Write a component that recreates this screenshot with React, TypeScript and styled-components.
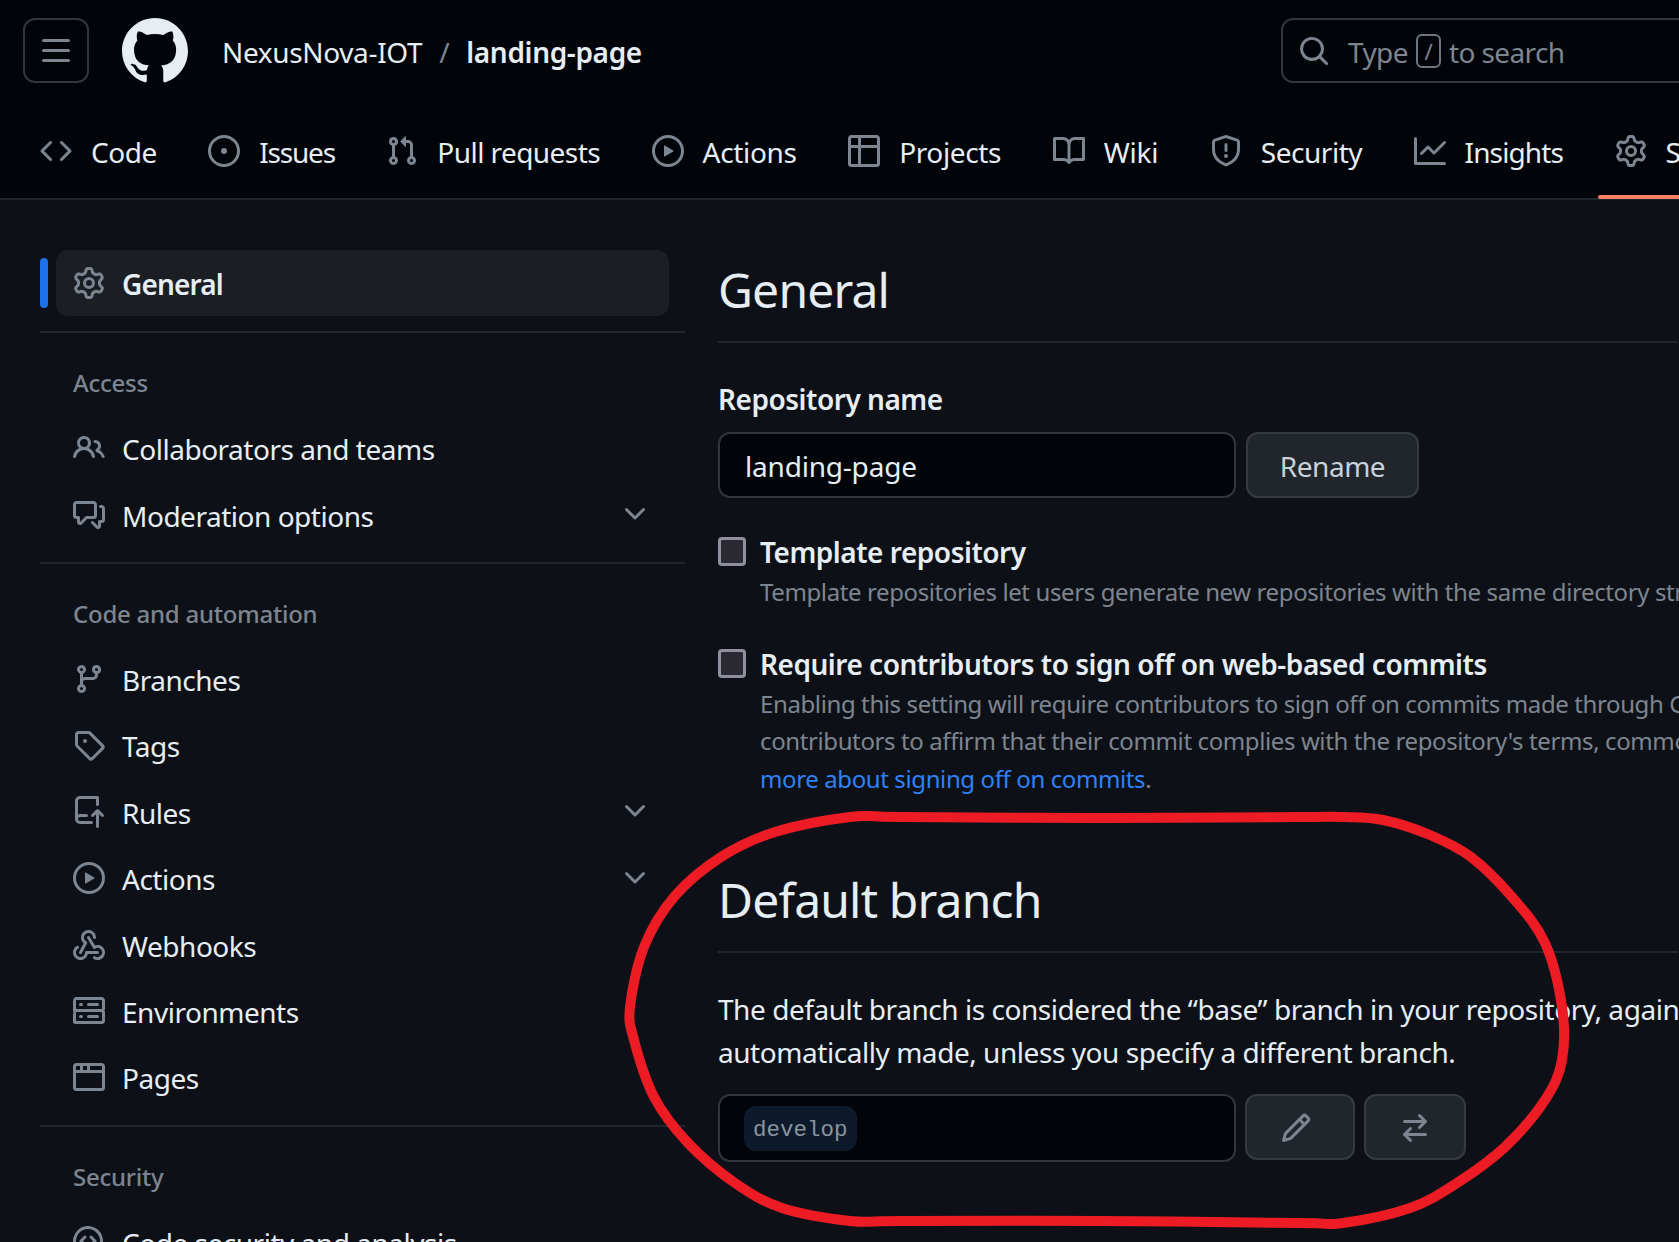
import React from "react";
import styled, { createGlobalStyle } from "styled-components";

const GlobalStyle = createGlobalStyle`
  html, body {
    margin: 0;
    padding: 0;
    background: #0d1117;
  }
  body {
    font-family: "Noto Sans", "Open Sans", "Liberation Sans", sans-serif;
    font-size: 28px;
    letter-spacing: -0.48px;
    color: #e6edf3;
  }
  * {
    box-sizing: border-box;
  }
`;

const Page = styled.div`
  position: relative;
  width: 1679px;
  height: 1242px;
  overflow: hidden;
  background: #0d1117;
`;

const Header = styled.header`
  height: 200px;
  background: #010409;
  border-bottom: 2px solid #21262d;
  padding-top: 18px;
`;

const TopRow = styled.div`
  display: flex;
  align-items: center;
  height: 65px;
  padding-left: 23px;
`;

const MenuButton = styled.div`
  display: flex;
  align-items: center;
  justify-content: center;
  width: 66px;
  height: 65px;
  border: 2px solid #30363d;
  border-radius: 12px;
  color: #7d8590;
  flex-shrink: 0;
`;

const Logo = styled.div`
  display: flex;
  margin-left: 33px;
  color: #e6edf3;
`;

const Crumbs = styled.div`
  display: flex;
  align-items: center;
  margin-left: 34px;
  margin-top: 3px;
  letter-spacing: -0.35px;
  white-space: nowrap;
`;

const CrumbSlash = styled.span`
  color: #7d8590;
  margin: 0 17px;
`;

const RepoName = styled.span`
  font-weight: 600;
`;

const SearchBox = styled.div`
  display: flex;
  align-items: center;
  flex-shrink: 0;
  width: 498px;
  height: 65px;
  margin-left: auto;
  margin-right: -100px;
  padding-left: 15px;
  border: 2px solid #30363d;
  border-radius: 12px;
  color: #7d8590;
  letter-spacing: -0.6px;
  white-space: nowrap;
`;

const SearchText = styled.span`
  margin-left: 18px;
  padding-top: 2px;
  display: flex;
  align-items: center;
`;

const SlashKey = styled.span`
  display: inline-flex;
  align-items: center;
  justify-content: center;
  width: 25px;
  height: 34px;
  margin: -2px 8px 0;
  border: 2px solid #6e7681;
  border-radius: 6px;
  font-size: 22px;
`;

const TabBar = styled.nav`
  display: flex;
  gap: 51.5px;
  height: 90px;
  margin-top: 25px;
  padding-left: 40px;
  white-space: nowrap;
`;

const Tab = styled.div<{ $active?: boolean; $track?: number }>`
  position: relative;
  display: flex;
  align-items: center;
  gap: 19px;
  padding-bottom: 2px;
  color: #e6edf3;
  letter-spacing: ${(p) => p.$track ?? -0.48}px;
  svg {
    color: #7d8590;
    margin-top: -2px;
  }
  &::after {
    content: "";
    display: ${(p) => (p.$active ? "block" : "none")};
    position: absolute;
    left: -17px;
    right: -17px;
    bottom: -1px;
    height: 4px;
    border-radius: 2px;
    background: #f78166;
  }
`;

const Body = styled.div`
  display: flex;
  align-items: flex-start;
  padding-left: 40px;
`;

const Sidebar = styled.aside`
  flex-shrink: 0;
  width: 645px;
  padding-top: 50px;
`;

const ActiveRow = styled.div`
  position: relative;
  display: flex;
  align-items: center;
  gap: 17px;
  width: 613px;
  height: 66px;
  margin: 0 0 15px 16px;
  padding: 2px 0 0 17px;
  border-radius: 12px;
  background: #1b1f24;
  font-weight: 600;
  letter-spacing: -0.85px;
  svg {
    color: #7d8590;
    margin-top: -2px;
  }
  &::before {
    content: "";
    position: absolute;
    left: -16px;
    top: 8px;
    width: 8px;
    height: 50px;
    border-radius: 4px;
    background: #1f6feb;
  }
`;

const Section = styled.section`
  border-top: 2px solid #21262d;
  padding: 31px 0 13px;
`;

const SectionTitle = styled.div`
  height: 38px;
  line-height: 38px;
  margin-bottom: 14px;
  padding-left: 33px;
  font-size: 24px;
  letter-spacing: -0.25px;
  color: #7d8590;
  font-weight: 500;
`;

const Row = styled.div`
  display: flex;
  align-items: center;
  gap: 17px;
  height: 66.4px;
  padding: 0 34px 0 33px;
  white-space: nowrap;
  svg {
    color: #7d8590;
    margin-top: -2px;
    flex-shrink: 0;
  }
`;

const RowChevron = styled.span`
  display: flex;
  margin-left: auto;
  margin-bottom: 1px;
`;

const Main = styled.main`
  flex-shrink: 0;
  width: 960px;
  margin-left: 33px;
  padding-top: 54px;
  white-space: nowrap;
`;

const Heading = styled.h2<{ $gap?: number }>`
  margin: ${(p) => p.$gap ?? 0}px 0 0;
  padding-bottom: 15px;
  border-bottom: 2px solid #21262d;
  font-size: 48px;
  line-height: 72px;
  font-weight: 400;
  letter-spacing: -0.82px;
`;

const FieldLabel = styled.div`
  margin-top: 35px;
  line-height: 42px;
  font-weight: 600;
`;

const NameRow = styled.div`
  display: flex;
  gap: 10px;
  margin-top: 12px;
`;

const NameInput = styled.div`
  display: flex;
  align-items: center;
  width: 518px;
  height: 66px;
  padding: 2px 0 0 25px;
  border: 2px solid #30363d;
  border-radius: 12px;
  background: #010409;
  letter-spacing: -0.2px;
`;

const Button = styled.div<{ $width: number; $shift?: number }>`
  display: flex;
  align-items: center;
  justify-content: center;
  width: ${(p) => p.$width}px;
  height: 66px;
  padding: 2px ${(p) => p.$shift ?? 0}px 0 0;
  border: 2px solid #363b42;
  border-radius: 12px;
  background: #21262d;
  color: #c9d1d9;
  svg {
    color: #7d8590;
  }
`;

const CheckRow = styled.div<{ $gap: number }>`
  display: flex;
  gap: 14px;
  margin-top: ${(p) => p.$gap}px;
`;

const CheckBox = styled.div`
  flex-shrink: 0;
  width: 28px;
  height: 29px;
  margin-top: 6px;
  border: 3px solid #8f8f9d;
  border-radius: 4px;
  background: #2b2a33;
`;

const CheckTitle = styled.div`
  line-height: 42px;
  font-weight: 600;
`;

const HelpText = styled.div`
  font-size: 24px;
  line-height: 37.5px;
  letter-spacing: -0.39px;
  color: #7d8590;
`;

const HelpLink = styled.span`
  color: #2f81f7;
`;

const Paragraph = styled.p`
  margin: 35px 0 21px;
  line-height: 42.6px;
  letter-spacing: -0.45px;
`;

const BranchRow = styled.div`
  display: flex;
  gap: 9px;
`;

const BranchBox = styled.div`
  display: flex;
  align-items: center;
  width: 518px;
  height: 68px;
  padding-left: 24px;
  border: 2px solid #30363d;
  border-radius: 12px;
  background: #010409;
`;

const BranchChip = styled.span`
  display: flex;
  align-items: center;
  height: 45px;
  padding: 3px 9px 0;
  border-radius: 12px;
  background: #0c1a2b;
  color: #8b949e;
  font-family: "Liberation Mono", "DejaVu Sans Mono", monospace;
  font-size: 22.5px;
  letter-spacing: 0;
`;

const Annotation = styled.svg`
  position: absolute;
  left: 0;
  top: 0;
  width: 1679px;
  height: 1242px;
  pointer-events: none;
`;

const icons = {
  mark: "M8 0c4.42 0 8 3.58 8 8a8.013 8.013 0 0 1-5.45 7.59c-.4.08-.55-.17-.55-.38 0-.27.01-1.13.01-2.2 0-.75-.25-1.23-.54-1.48 1.78-.2 3.65-.88 3.65-3.95 0-.88-.31-1.59-.82-2.15.08-.2.36-1.02-.08-2.12 0 0-.67-.22-2.2.82-.64-.18-1.32-.27-2-.27-.68 0-1.36.09-2 .27-1.53-1.03-2.2-.82-2.2-.82-.44 1.1-.16 1.92-.08 2.12-.51.56-.82 1.28-.82 2.15 0 3.06 1.86 3.75 3.64 3.95-.23.2-.44.55-.51 1.07-.46.21-1.61.55-2.33-.66-.15-.24-.6-.83-1.23-.82-.67.01-.27.38.01.53.34.19.73.9.82 1.13.16.45.68 1.31 2.69.94 0 .67.01 1.3.01 1.49 0 .21-.15.45-.55.38A7.995 7.995 0 0 1 0 8c0-4.42 3.58-8 8-8Z",
  bars: "M1 2.75A.75.75 0 0 1 1.75 2h12.5a.75.75 0 0 1 0 1.5H1.75A.75.75 0 0 1 1 2.75Zm0 5A.75.75 0 0 1 1.75 7h12.5a.75.75 0 0 1 0 1.5H1.75A.75.75 0 0 1 1 7.75ZM1.75 12h12.5a.75.75 0 0 1 0 1.5H1.75a.75.75 0 0 1 0-1.5Z",
  search: "M10.68 11.74a6 6 0 0 1-7.922-8.982 6 6 0 0 1 8.982 7.922l3.04 3.04a.749.749 0 0 1-.326 1.275.749.749 0 0 1-.734-.215ZM11.5 7a4.499 4.499 0 1 0-8.997 0A4.499 4.499 0 0 0 11.5 7Z",
  code: "m11.28 3.22 4.25 4.25a.75.75 0 0 1 0 1.06l-4.25 4.25a.749.749 0 0 1-1.275-.326.749.749 0 0 1 .215-.734L13.94 8l-3.72-3.72a.749.749 0 0 1 .326-1.275.749.749 0 0 1 .734.215Zm-6.56 0a.751.751 0 0 1 1.042.018.751.751 0 0 1 .018 1.042L2.06 8l3.72 3.72a.749.749 0 0 1-.326 1.275.749.749 0 0 1-.734-.215L.47 8.53a.75.75 0 0 1 0-1.06Z",
  issue: "M8 9.5a1.5 1.5 0 1 0 0-3 1.5 1.5 0 0 0 0 3Z M8 0a8 8 0 1 1 0 16A8 8 0 0 1 8 0ZM1.5 8a6.5 6.5 0 1 0 13 0 6.5 6.5 0 0 0-13 0Z",
  pull: "M1.5 3.25a2.25 2.25 0 1 1 3 2.122v5.256a2.251 2.251 0 1 1-1.5 0V5.372A2.25 2.25 0 0 1 1.5 3.25Zm5.677-.177L9.573.677A.25.25 0 0 1 10 .854V2.5h1A2.5 2.5 0 0 1 13.5 5v5.628a2.251 2.251 0 1 1-1.5 0V5a1 1 0 0 0-1-1h-1v1.646a.25.25 0 0 1-.427.177L7.177 3.427a.25.25 0 0 1 0-.354ZM3.75 2.5a.75.75 0 1 0 0 1.5.75.75 0 0 0 0-1.5Zm0 9.5a.75.75 0 1 0 0 1.5.75.75 0 0 0 0-1.5Zm8.25.75a.75.75 0 1 0 1.5 0 .75.75 0 0 0-1.5 0Z",
  play: "M8 0a8 8 0 1 1 0 16A8 8 0 0 1 8 0ZM1.5 8a6.5 6.5 0 1 0 13 0 6.5 6.5 0 0 0-13 0Zm4.879-2.773 4.264 2.559a.25.25 0 0 1 0 .428l-4.264 2.559A.25.25 0 0 1 6 10.559V5.442a.25.25 0 0 1 .379-.215Z",
  table: "M0 1.75C0 .784.784 0 1.75 0h12.5C15.216 0 16 .784 16 1.75v12.5A1.75 1.75 0 0 1 14.25 16H1.75A1.75 1.75 0 0 1 0 14.25ZM6.5 6.5v8h7.75a.25.25 0 0 0 .25-.25V6.5Zm8-1.5V1.75a.25.25 0 0 0-.25-.25H6.5V5Zm-13 1.5v7.75c0 .138.112.25.25.25H5v-8ZM5 5V1.5H1.75a.25.25 0 0 0-.25.25V5Z",
  book: "M0 1.75A.75.75 0 0 1 .75 1h4.253c1.227 0 2.317.59 3 1.501A3.743 3.743 0 0 1 11.006 1h4.245a.75.75 0 0 1 .75.75v10.5a.75.75 0 0 1-.75.75h-4.507a2.25 2.25 0 0 0-1.591.659l-.622.621a.75.75 0 0 1-1.06 0l-.622-.621A2.25 2.25 0 0 0 5.258 13H.75a.75.75 0 0 1-.75-.75Zm7.251 10.324.004-5.073-.002-2.253A2.25 2.25 0 0 0 5.003 2.5H1.5v9h3.757a3.75 3.75 0 0 1 1.994.574ZM8.755 4.75l-.004 7.322a3.752 3.752 0 0 1 1.992-.572H14.5v-9h-3.495a2.25 2.25 0 0 0-2.25 2.25Z",
  shield: "M7.467.133a1.748 1.748 0 0 1 1.066 0l5.25 1.68A1.75 1.75 0 0 1 15 3.48V7c0 1.566-.32 3.182-1.303 4.682-.983 1.498-2.585 2.813-5.032 3.855a1.697 1.697 0 0 1-1.33 0c-2.447-1.042-4.049-2.357-5.032-3.855C1.32 10.182 1 8.566 1 7V3.48a1.75 1.75 0 0 1 1.217-1.667Zm.61 1.429a.25.25 0 0 0-.153 0l-5.25 1.68a.25.25 0 0 0-.174.238V7c0 1.358.275 2.666 1.057 3.86.784 1.194 2.121 2.34 4.366 3.297a.196.196 0 0 0 .154 0c2.245-.956 3.582-2.104 4.366-3.298C13.225 9.666 13.5 8.36 13.5 7V3.48a.251.251 0 0 0-.174-.237l-5.25-1.68ZM8.75 4.75v3a.75.75 0 0 1-1.5 0v-3a.75.75 0 0 1 1.5 0ZM9 10.5a1 1 0 1 1-2 0 1 1 0 0 1 2 0Z",
  graph: "M1.5 1.75V13.5h13.75a.75.75 0 0 1 0 1.5H.75a.75.75 0 0 1-.75-.75V1.75a.75.75 0 0 1 1.5 0Zm14.28 2.53-5.25 5.25a.75.75 0 0 1-1.06 0L7 7.06 4.28 9.78a.751.751 0 0 1-1.042-.018.751.751 0 0 1-.018-1.042l3.25-3.25a.75.75 0 0 1 1.06 0L10 7.94l4.72-4.72a.751.751 0 0 1 1.042.018.751.751 0 0 1 .018 1.042Z",
  gear: "M8 0a8.2 8.2 0 0 1 .701.031C9.444.095 9.99.645 10.16 1.29l.288 1.107c.018.066.079.158.212.224.231.114.454.243.668.386.123.082.233.09.299.071l1.103-.303c.644-.176 1.392.021 1.82.63.27.385.506.792.704 1.218.315.675.111 1.422-.364 1.891l-.814.806c-.049.048-.098.147-.088.294.016.257.016.515 0 .772-.01.147.038.246.088.294l.814.806c.475.469.679 1.216.364 1.891a7.977 7.977 0 0 1-.704 1.217c-.428.61-1.176.807-1.82.63l-1.102-.302c-.067-.019-.177-.011-.3.071a5.909 5.909 0 0 1-.668.386c-.133.066-.194.158-.211.224l-.29 1.106c-.168.646-.715 1.196-1.458 1.26a8.006 8.006 0 0 1-1.402 0c-.743-.064-1.289-.614-1.458-1.26l-.289-1.106c-.018-.066-.079-.158-.212-.224a5.738 5.738 0 0 1-.668-.386c-.123-.082-.233-.09-.299-.071l-1.103.303c-.644.176-1.392-.021-1.82-.63a8.12 8.12 0 0 1-.704-1.218c-.315-.675-.111-1.422.363-1.891l.815-.806c.05-.048.098-.147.088-.294a6.214 6.214 0 0 1 0-.772c.01-.147-.038-.246-.088-.294l-.815-.806C.635 6.045.431 5.298.746 4.623a7.92 7.92 0 0 1 .704-1.217c.428-.61 1.176-.807 1.82-.63l1.102.302c.067.019.177.011.3-.071.214-.143.437-.272.668-.386.133-.066.194-.158.211-.224l.29-1.106C6.009.645 6.556.095 7.299.03 7.53.01 7.764 0 8 0Zm-.571 1.525c-.036.003-.108.036-.137.146l-.289 1.105c-.147.561-.549.967-.998 1.189-.173.086-.34.183-.5.29-.417.278-.97.423-1.529.27l-1.103-.303c-.109-.03-.175.016-.195.045-.22.312-.412.644-.573.99-.014.031-.021.11.059.19l.815.806c.411.406.562.957.53 1.456a4.709 4.709 0 0 0 0 .582c.032.499-.119 1.05-.53 1.456l-.815.806c-.081.08-.073.159-.059.19.162.346.353.677.573.989.02.03.085.076.195.046l1.102-.303c.56-.153 1.113-.008 1.53.27.161.107.328.204.501.29.447.222.85.629.997 1.189l.289 1.105c.029.109.101.143.137.146a6.6 6.6 0 0 0 1.142 0c.036-.003.108-.036.137-.146l.289-1.105c.147-.561.549-.967.998-1.189.173-.086.34-.183.5-.29.417-.278.97-.423 1.529-.27l1.103.303c.109.029.175-.016.195-.045.22-.313.411-.644.573-.99.014-.031.021-.11-.059-.19l-.815-.806c-.411-.406-.562-.957-.53-1.456a4.709 4.709 0 0 0 0-.582c-.032-.499.119-1.05.53-1.456l.815-.806c.081-.08.073-.159.059-.19a6.464 6.464 0 0 0-.573-.989c-.02-.03-.085-.076-.195-.046l-1.102.303c-.56.153-1.113.008-1.53-.27a4.44 4.44 0 0 0-.501-.29c-.447-.222-.85-.629-.997-1.189l-.289-1.105c-.029-.11-.101-.143-.137-.146a6.6 6.6 0 0 0-1.142 0ZM11 8a3 3 0 1 1-6 0 3 3 0 0 1 6 0ZM9.5 8a1.5 1.5 0 1 0-3.001.001A1.5 1.5 0 0 0 9.5 8Z",
  people: "M2 5.5a3.5 3.5 0 1 1 5.898 2.549 5.508 5.508 0 0 1 3.034 4.084.75.75 0 1 1-1.482.235 4 4 0 0 0-7.9 0 .75.75 0 0 1-1.482-.236A5.507 5.507 0 0 1 3.102 8.05 3.493 3.493 0 0 1 2 5.5ZM11 4a3.001 3.001 0 0 1 2.22 5.018 5.01 5.01 0 0 1 2.56 3.012.749.749 0 0 1-.885.954.752.752 0 0 1-.549-.514 3.507 3.507 0 0 0-2.522-2.372.75.75 0 0 1-.574-.73v-.352a.75.75 0 0 1 .416-.672A1.5 1.5 0 0 0 11 5.5.75.75 0 0 1 11 4Zm-5.5-.5a2 2 0 1 0-.001 3.999A2 2 0 0 0 5.5 3.5Z",
  discussion: "M1.75 1h8.5c.966 0 1.75.784 1.75 1.75v5.5A1.75 1.75 0 0 1 10.25 10H7.061l-2.574 2.573A1.458 1.458 0 0 1 2 11.543V10h-.25A1.75 1.75 0 0 1 0 8.25v-5.5C0 1.784.784 1 1.75 1ZM1.5 2.75v5.5c0 .138.112.25.25.25h1a.75.75 0 0 1 .75.75v2.19l2.72-2.72a.749.749 0 0 1 .53-.22h3.5a.25.25 0 0 0 .25-.25v-5.5a.25.25 0 0 0-.25-.25h-8.5a.25.25 0 0 0-.25.25Zm13 2a.25.25 0 0 0-.25-.25h-.5a.75.75 0 0 1 0-1.5h.5c.966 0 1.75.784 1.75 1.75v5.5A1.75 1.75 0 0 1 14.25 12H14v1.543a1.458 1.458 0 0 1-2.487 1.03L9.22 12.28a.749.749 0 0 1 .326-1.275.749.749 0 0 1 .734.215l2.22 2.22v-2.19a.75.75 0 0 1 .75-.75h1a.25.25 0 0 0 .25-.25Z",
  chevron: "M12.78 5.22a.749.749 0 0 1 0 1.06l-4.25 4.25a.749.749 0 0 1-1.06 0L3.22 6.28a.749.749 0 1 1 1.06-1.06L8 8.939l3.72-3.719a.749.749 0 0 1 1.06 0Z",
  branch: "M9.5 3.25a2.25 2.25 0 1 1 3 2.122V6A2.5 2.5 0 0 1 10 8.5H6a1 1 0 0 0-1 1v1.128a2.251 2.251 0 1 1-1.5 0V5.372a2.25 2.25 0 1 1 1.5 0v1.836A2.493 2.493 0 0 1 6 7h4a1 1 0 0 0 1-1v-.628A2.25 2.25 0 0 1 9.5 3.25Zm-6 0a.75.75 0 1 0 1.5 0 .75.75 0 0 0-1.5 0Zm8.25-.75a.75.75 0 1 0 0 1.5.75.75 0 0 0 0-1.5ZM4.25 12a.75.75 0 1 0 0 1.5.75.75 0 0 0 0-1.5Z",
  tag: "M1 7.775V2.75C1 1.784 1.784 1 2.75 1h5.025c.464 0 .91.184 1.238.513l6.25 6.25a1.75 1.75 0 0 1 0 2.474l-5.026 5.026a1.75 1.75 0 0 1-2.474 0l-6.25-6.25A1.75 1.75 0 0 1 1 7.775Zm1.5 0c0 .066.026.13.073.177l6.25 6.25a.25.25 0 0 0 .354 0l5.025-5.025a.25.25 0 0 0 0-.354l-6.25-6.25a.25.25 0 0 0-.177-.073H2.75a.25.25 0 0 0-.25.25ZM6 5a1 1 0 1 1 0 2 1 1 0 0 1 0-2Z",
  repoPush: "M1 2.5A2.5 2.5 0 0 1 3.5 0h8.75a.75.75 0 0 1 .75.75v3.5a.75.75 0 0 1-1.5 0V1.5h-8a1 1 0 0 0-1 1v6.708A2.493 2.493 0 0 1 3.5 9h3.25a.75.75 0 0 1 0 1.5H3.5a1 1 0 0 0 0 2h5.75a.75.75 0 0 1 0 1.5H3.5A2.5 2.5 0 0 1 1 11.5Zm13.23 7.79h-.001l-1.224-1.224v6.184a.75.75 0 0 1-1.5 0V9.066L10.28 10.29a.75.75 0 0 1-1.06-1.061l2.505-2.504a.75.75 0 0 1 1.06 0L15.29 9.23a.751.751 0 0 1-.018 1.042.751.751 0 0 1-1.042.018Z",
  webhook: "M5.5 4.25a2.25 2.25 0 0 1 4.5 0 .75.75 0 0 0 1.5 0 3.75 3.75 0 1 0-6.14 2.889l-2.272 4.258a.75.75 0 0 0 1.324.706L7 7.25a.75.75 0 0 0-.309-1.015A2.25 2.25 0 0 1 5.5 4.25Z M7.364 3.607a.75.75 0 0 1 1.03.257l2.608 4.349a3.75 3.75 0 1 1-.628 6.785.75.75 0 0 1 .752-1.299 2.25 2.25 0 1 0-.033-3.88.75.75 0 0 1-1.03-.256L7.107 4.636a.75.75 0 0 1 .257-1.03Z M2.9 8.776A.75.75 0 0 1 2.625 9.8 2.25 2.25 0 1 0 6 11.75a.75.75 0 0 1 .75-.751h5.5a.75.75 0 0 1 0 1.5H7.425a3.751 3.751 0 1 1-5.55-3.998.75.75 0 0 1 1.024.274Z",
  server: "M1.75 1h12.5c.966 0 1.75.784 1.75 1.75v4c0 .372-.116.717-.314 1 .198.283.314.628.314 1v4a1.75 1.75 0 0 1-1.75 1.75H1.75A1.75 1.75 0 0 1 0 13.75v-4c0-.372.116-.717.314-1a1.739 1.739 0 0 1-.314-1v-4C0 1.784.784 1 1.75 1ZM1.5 2.75v4c0 .138.112.25.25.25h12.5a.25.25 0 0 0 .25-.25v-4a.25.25 0 0 0-.25-.25H1.75a.25.25 0 0 0-.25.25Zm.25 5.75a.25.25 0 0 0-.25.25v4c0 .138.112.25.25.25h12.5a.25.25 0 0 0 .25-.25v-4a.25.25 0 0 0-.25-.25ZM7 4.75A.75.75 0 0 1 7.75 4h4.5a.75.75 0 0 1 0 1.5h-4.5A.75.75 0 0 1 7 4.75ZM7.75 10h4.5a.75.75 0 0 1 0 1.5h-4.5a.75.75 0 0 1 0-1.5ZM3 4.75A.75.75 0 0 1 3.75 4h.5a.75.75 0 0 1 0 1.5h-.5A.75.75 0 0 1 3 4.75ZM3.75 10h.5a.75.75 0 0 1 0 1.5h-.5a.75.75 0 0 1 0-1.5Z",
  browser: "M0 2.75C0 1.784.784 1 1.75 1h12.5c.966 0 1.75.784 1.75 1.75v10.5A1.75 1.75 0 0 1 14.25 15H1.75A1.75 1.75 0 0 1 0 13.25ZM14.5 6h-13v7.25c0 .138.112.25.25.25h12.5a.25.25 0 0 0 .25-.25Zm-6-3.5v2h6V2.75a.25.25 0 0 0-.25-.25ZM5 2.5v2h2v-2Zm-3.25 0a.25.25 0 0 0-.25.25V4.5h2v-2Z",
  pencil: "M11.013 1.427a1.75 1.75 0 0 1 2.474 0l1.086 1.086a1.75 1.75 0 0 1 0 2.474l-8.61 8.61c-.21.21-.47.364-.756.445l-3.251.93a.75.75 0 0 1-.927-.928l.929-3.25c.081-.286.235-.547.445-.758l8.61-8.61Zm.176 4.823L9.75 4.81l-6.286 6.287a.253.253 0 0 0-.064.108l-.558 1.953 1.953-.558a.253.253 0 0 0 .108-.064Zm1.238-3.763a.25.25 0 0 0-.354 0L10.811 3.75l1.439 1.44 1.263-1.263a.25.25 0 0 0 0-.354Z",
  arrowSwitch: "M5.22 14.78a.75.75 0 0 0 1.06-1.06L4.56 12h8.69a.75.75 0 0 0 0-1.5H4.56l1.72-1.72a.75.75 0 0 0-1.06-1.06l-3 3a.75.75 0 0 0 0 1.06l3 3Zm5.56-6.5a.75.75 0 1 1-1.06-1.06l1.72-1.72H2.75a.75.75 0 0 1 0-1.5h8.69L9.72 2.28a.75.75 0 0 1 1.06-1.06l3 3a.75.75 0 0 1 0 1.06l-3 3Z",
  codescan: "M8.47 4.97a.75.75 0 0 0 0 1.06L9.94 7.5 8.47 8.97a.75.75 0 1 0 1.06 1.06l2-2a.75.75 0 0 0 0-1.06l-2-2a.75.75 0 0 0-1.06 0ZM6.53 6.03a.75.75 0 0 0-1.06-1.06l-2 2a.75.75 0 0 0 0 1.06l2 2a.75.75 0 1 0 1.06-1.06L5.06 7.5l1.47-1.47Z M12.246 13.307a7.501 7.501 0 1 1 1.06-1.06l2.474 2.473a.749.749 0 0 1-.326 1.275.749.749 0 0 1-.734-.215ZM1.5 7.5a6.002 6.002 0 0 0 3.608 5.504 6.002 6.002 0 0 0 6.486-1.117.748.748 0 0 1 .293-.293A6 6 0 1 0 1.5 7.5Z",
};

type IconName = keyof typeof icons;

const Octicon = ({ name, size = 32 }: { name: IconName; size?: number }) => (
  <svg width={size} height={size} viewBox="0 0 16 16" fill="currentColor">
    <path d={icons[name]} />
  </svg>
);

// hand drawn ring around the default branch block, traced from the picture
const ringPoints: [number, number][] = [
  [850, 817], [900, 817], [1100, 818], [1300, 817], [1343, 817], [1383, 820], [1430, 835],
  [1471, 857], [1512, 897], [1545, 943], [1562, 1007], [1562, 1060], [1545, 1100],
  [1505, 1147], [1457, 1183], [1410, 1208], [1343, 1223], [1300, 1223], [1100, 1221],
  [900, 1221], [850, 1221], [782, 1208], [735, 1183], [688, 1143], [654, 1097], [634, 1040],
  [630, 1007], [644, 947], [674, 897], [721, 857], [775, 832],
];

function ringPath(points: [number, number][]) {
  const n = points.length;
  let d = `M${points[0][0]} ${points[0][1]}`;
  for (let i = 0; i < n; i++) {
    const p0 = points[(i - 1 + n) % n];
    const p1 = points[i];
    const p2 = points[(i + 1) % n];
    const p3 = points[(i + 2) % n];
    const c1x = p1[0] + (p2[0] - p0[0]) / 6;
    const c1y = p1[1] + (p2[1] - p0[1]) / 6;
    const c2x = p2[0] - (p3[0] - p1[0]) / 6;
    const c2y = p2[1] - (p3[1] - p1[1]) / 6;
    d += ` C${c1x} ${c1y} ${c2x} ${c2y} ${p2[0]} ${p2[1]}`;
  }
  return d + " Z";
}

type NavItem = { label: string; icon: IconName; active?: boolean; more?: boolean; track?: number };

const tabs: NavItem[] = [
  { label: "Code", icon: "code" },
  { label: "Issues", icon: "issue", track: -1.2 },
  { label: "Pull requests", icon: "pull", track: -0.56 },
  { label: "Actions", icon: "play", track: -0.33 },
  { label: "Projects", icon: "table", track: -0.35 },
  { label: "Wiki", icon: "book", track: -0.2 },
  { label: "Security", icon: "shield" },
  { label: "Insights", icon: "graph", track: -0.88 },
  { label: "Settings", icon: "gear", active: true },
];

const accessRows: NavItem[] = [
  { label: "Collaborators and teams", icon: "people" },
  { label: "Moderation options", icon: "discussion", more: true },
];

const codeRows: NavItem[] = [
  { label: "Branches", icon: "branch" },
  { label: "Tags", icon: "tag" },
  { label: "Rules", icon: "repoPush", more: true },
  { label: "Actions", icon: "play", more: true },
  { label: "Webhooks", icon: "webhook" },
  { label: "Environments", icon: "server" },
  { label: "Pages", icon: "browser" },
];

const securityRows: NavItem[] = [{ label: "Code security and analysis", icon: "codescan" }];

const SideRows = ({ items }: { items: NavItem[] }) => (
  <>
    {items.map((item) => (
      <Row key={item.label}>
        <Octicon name={item.icon} />
        {item.label}
        {item.more && (
          <RowChevron>
            <Octicon name="chevron" />
          </RowChevron>
        )}
      </Row>
    ))}
  </>
);

export default function App() {
  return (
    <Page>
      <GlobalStyle />
      <Header>
        <TopRow>
          <MenuButton>
            <Octicon name="bars" />
          </MenuButton>
          <Logo>
            <Octicon name="mark" size={66} />
          </Logo>
          <Crumbs>
            NexusNova-IOT
            <CrumbSlash>/</CrumbSlash>
            <RepoName>landing-page</RepoName>
          </Crumbs>
          <SearchBox>
            <Octicon name="search" />
            <SearchText>
              Type<SlashKey>/</SlashKey>to search
            </SearchText>
          </SearchBox>
        </TopRow>
        <TabBar>
          {tabs.map((tab) => (
            <Tab key={tab.label} $active={tab.active} $track={tab.track}>
              <Octicon name={tab.icon} />
              {tab.label}
            </Tab>
          ))}
        </TabBar>
      </Header>
      <Body>
        <Sidebar>
          <ActiveRow>
            <Octicon name="gear" />
            General
          </ActiveRow>
          <Section>
            <SectionTitle>Access</SectionTitle>
            <SideRows items={accessRows} />
          </Section>
          <Section>
            <SectionTitle>Code and automation</SectionTitle>
            <SideRows items={codeRows} />
          </Section>
          <Section>
            <SectionTitle>Security</SectionTitle>
            <SideRows items={securityRows} />
          </Section>
        </Sidebar>
        <Main>
          <Heading>General</Heading>
          <FieldLabel>Repository name</FieldLabel>
          <NameRow>
            <NameInput>landing-page</NameInput>
            <Button $width={173}>Rename</Button>
          </NameRow>
          <CheckRow $gap={33}>
            <CheckBox />
            <div>
              <CheckTitle>Template repository</CheckTitle>
              <HelpText>
                Template repositories let users generate new repositories with the same directory structure and files.
              </HelpText>
            </div>
          </CheckRow>
          <CheckRow $gap={32}>
            <CheckBox />
            <div>
              <CheckTitle>Require contributors to sign off on web-based commits</CheckTitle>
              <HelpText>
                Enabling this setting will require contributors to sign off on commits made through GitHub's web interface.
                <br />
                contributors to affirm that their commit complies with the repository's terms, commonly the Developer
                <br />
                <HelpLink>more about signing off on commits</HelpLink>.
              </HelpText>
            </div>
          </CheckRow>
          <Heading $gap={67}>Default branch</Heading>
          <Paragraph>
            The default branch is considered the “base” branch in your repository, against which all pull requests
            <br />
            automatically made, unless you specify a different branch.
          </Paragraph>
          <BranchRow>
            <BranchBox>
              <BranchChip>develop</BranchChip>
            </BranchBox>
            <Button $width={110} $shift={8}>
              <Octicon name="pencil" />
            </Button>
            <Button $width={102}>
              <Octicon name="arrowSwitch" />
            </Button>
          </BranchRow>
        </Main>
      </Body>
      <Annotation viewBox="0 0 1679 1242">
        <path d={ringPath(ringPoints)} fill="none" stroke="#ed1c24" strokeWidth={10} />
      </Annotation>
    </Page>
  );
}
